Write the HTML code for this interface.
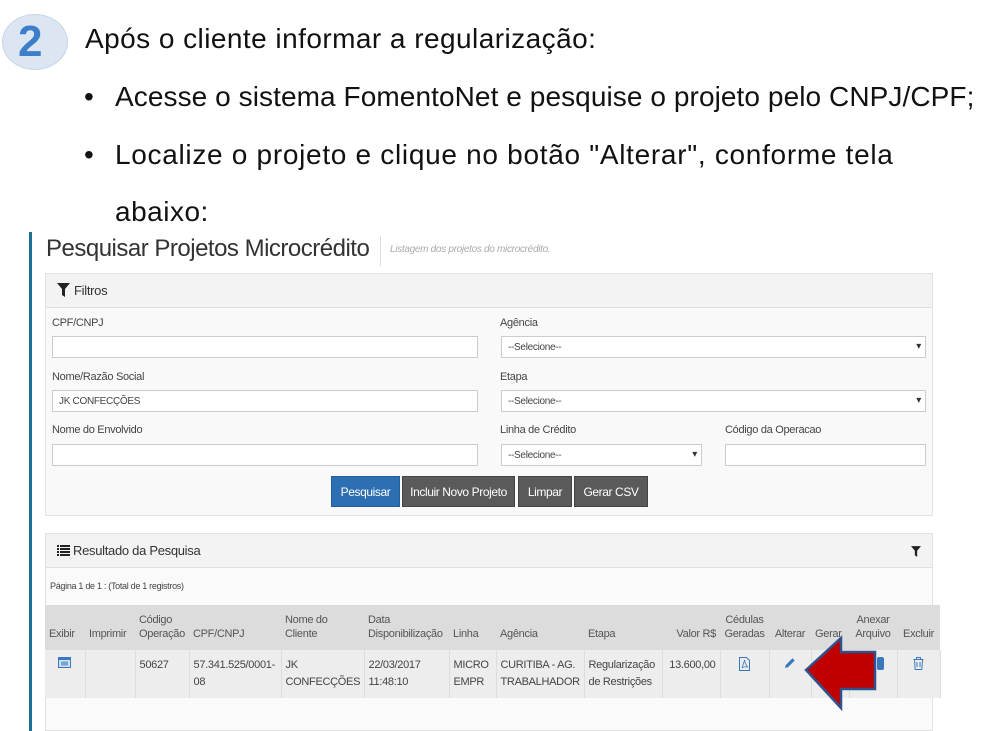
<!DOCTYPE html>
<html><head><meta charset="utf-8">
<style>
*{margin:0;padding:0;box-sizing:border-box}
body{width:999px;height:731px;overflow:hidden;background:#fff;position:relative;font-family:"Liberation Sans",sans-serif;color:#333}
.a{position:absolute}
.big{font-family:"Liberation Sans",sans-serif;font-size:28px;color:#111;white-space:nowrap}
.lbl{font-size:11px;color:#444;position:absolute;letter-spacing:-0.3px}
.inp{position:absolute;background:#fff;border:1px solid #ccc;height:22px;font-size:10px;color:#444;padding:5px 6px;letter-spacing:-0.3px}
.sel::after{content:"▾";position:absolute;right:4px;top:4px;font-size:10px;color:#333}
.btn{position:absolute;top:476px;height:31px;color:#fff;font-size:12px;line-height:31px;text-align:center;letter-spacing:-0.4px;background:#5a5a5a;border:1px solid #444}
table{position:absolute;left:45px;top:605px;border-collapse:collapse;font-size:11px;letter-spacing:-0.3px;color:#444;table-layout:fixed;width:895px}
th{background:#dcdcdc;color:#555;text-align:left;vertical-align:bottom;padding:3px 4px 9px;height:45px;line-height:14px;font-weight:normal;white-space:nowrap}
td{background:#ededed;border-right:1px solid #ddd;vertical-align:top;padding:7px 4px;height:48px;line-height:17px;white-space:nowrap;overflow:hidden}
</style></head><body>
<div class="a" style="left:2px;top:14px;width:66px;height:56px;border-radius:50%;background:#dce6f2;border:1px solid #c5d5e8"></div>
<div class="a" style="left:18px;top:14px;font-size:44px;font-weight:bold;color:#3c7fc8;line-height:56px">2</div>
<div class="a big" style="left:85px;top:23px;letter-spacing:0.45px">Após o cliente informar a regularização:</div>
<div class="a big" style="left:84px;top:81px">•</div>
<div class="a big" style="left:115px;top:81px;letter-spacing:0.08px">Acesse o sistema FomentoNet e pesquise o projeto pelo CNPJ/CPF;</div>
<div class="a big" style="left:84px;top:139px">•</div>
<div class="a big" style="left:115px;top:139px;letter-spacing:0.7px">Localize o projeto e clique no botão "Alterar", conforme tela</div>
<div class="a big" style="left:115px;top:196px;letter-spacing:0.5px">abaixo:</div>

<div class="a" style="left:29px;top:232px;width:3px;height:499px;background:#1f6f96"></div>
<div class="a" style="left:46px;top:235px;font-size:24px;color:#333;letter-spacing:-0.5px;white-space:nowrap">Pesquisar Projetos Microcrédito</div>
<div class="a" style="left:380px;top:236px;width:1px;height:30px;background:#ddd"></div>
<div class="a" style="left:390px;top:244px;font-size:10px;font-style:italic;color:#aaa;letter-spacing:-0.3px">Listagem dos projetos do microcrédito.</div>

<div class="a" style="left:45px;top:273px;width:888px;height:243px;background:#f9f9f9;border:1px solid #e2e2e2"></div>
<div class="a" style="left:46px;top:274px;width:886px;height:34px;background:#f3f3f3;border-bottom:1px solid #e0e0e0"></div>
<svg class="a" style="left:57px;top:283px" width="13" height="14" viewBox="0 0 13 14"><path d="M0 0H13L8 6V14L5 12V6Z" fill="#222"/></svg>
<div class="a" style="left:74px;top:283px;font-size:13px;color:#333;letter-spacing:-0.3px">Filtros</div>

<div class="lbl" style="left:52px;top:317px">CPF/CNPJ</div>
<div class="inp" style="left:52px;top:336px;width:426px"></div>
<div class="lbl" style="left:52px;top:371px">Nome/Razão Social</div>
<div class="inp" style="left:52px;top:390px;width:426px">JK CONFECÇÕES</div>
<div class="lbl" style="left:52px;top:424px">Nome do Envolvido</div>
<div class="inp" style="left:52px;top:444px;width:426px"></div>

<div class="lbl" style="left:500px;top:317px">Agência</div>
<div class="inp sel" style="left:501px;top:336px;width:425px">--Selecione--</div>
<div class="lbl" style="left:500px;top:371px">Etapa</div>
<div class="inp sel" style="left:501px;top:390px;width:425px">--Selecione--</div>
<div class="lbl" style="left:500px;top:424px">Linha de Crédito</div>
<div class="inp sel" style="left:501px;top:444px;width:201px">--Selecione--</div>
<div class="lbl" style="left:725px;top:424px">Código da Operacao</div>
<div class="inp" style="left:725px;top:444px;width:201px"></div>

<div class="btn" style="left:331px;width:69px;background:#2c6fb2;border-color:#22609e">Pesquisar</div>
<div class="btn" style="left:402px;width:113px">Incluir Novo Projeto</div>
<div class="btn" style="left:518px;width:54px">Limpar</div>
<div class="btn" style="left:574px;width:74px">Gerar CSV</div>

<div class="a" style="left:45px;top:533px;width:888px;height:198px;background:#fafafa;border:1px solid #e2e2e2"></div>
<div class="a" style="left:46px;top:534px;width:886px;height:34px;background:#f3f3f3;border-bottom:1px solid #e0e0e0"></div>
<svg class="a" style="left:57px;top:545px" width="13" height="11" viewBox="0 0 13 11"><g fill="#222"><rect x="0" y="0" width="2" height="2"/><rect x="3" y="0" width="10" height="2"/><rect x="0" y="3" width="2" height="2"/><rect x="3" y="3" width="10" height="2"/><rect x="0" y="6" width="2" height="2"/><rect x="3" y="6" width="10" height="2"/><rect x="0" y="9" width="2" height="2"/><rect x="3" y="9" width="10" height="2"/></g></svg>
<div class="a" style="left:73px;top:543px;font-size:13px;color:#333;letter-spacing:-0.3px">Resultado da Pesquisa</div>
<svg class="a" style="left:911px;top:546px" width="10" height="11" viewBox="0 0 13 14"><path d="M0 0H13L8 6V14L5 12V6Z" fill="#222"/></svg>
<div class="a" style="left:50px;top:581px;font-size:9px;color:#444;letter-spacing:-0.3px">Página 1 de 1 : (Total de 1 registros)</div>

<table>
<colgroup><col style="width:40px"><col style="width:50px"><col style="width:54px"><col style="width:92px"><col style="width:83px"><col style="width:85px"><col style="width:47px"><col style="width:88px"><col style="width:78px"><col style="width:58px"><col style="width:49px"><col style="width:42px"><col style="width:38px"><col style="width:48px"><col style="width:43px"></colgroup>
<tr>
<th>Exibir</th><th>Imprimir</th><th>Código<br>Operação</th><th>CPF/CNPJ</th><th>Nome do<br>Cliente</th><th>Data<br>Disponibilização</th><th>Linha</th><th>Agência</th><th>Etapa</th><th style="text-align:right">Valor R$</th><th style="text-align:center">Cédulas<br>Geradas</th><th style="text-align:center">Alterar</th><th>Gerar</th><th style="text-align:center">Anexar<br>Arquivo</th><th style="text-align:center">Excluir</th>
</tr>
<tr>
<td style="text-align:center"><svg width="13" height="11" viewBox="0 0 13 11"><rect x="0.5" y="0.5" width="12" height="10" fill="#cfe0f3" stroke="#3a78bd"/><rect x="0.5" y="0.5" width="12" height="2.5" fill="#3a78bd"/><rect x="3" y="4.5" width="7" height="4" fill="#3a78bd" opacity=".6"/></svg></td>
<td></td><td>50627</td><td>57.341.525/0001-<br>08</td><td>JK<br>CONFECÇÕES</td><td>22/03/2017<br>11:48:10</td><td>MICRO<br>EMPR</td><td>CURITIBA - AG.<br>TRABALHADOR</td><td>Regularização<br>de Restrições</td><td style="text-align:right">13.600,00</td>
<td style="text-align:center"><svg width="11" height="14" viewBox="0 0 11 14"><path d="M0.5 0.5H7.5L10.5 3.5V13.5H0.5Z" fill="none" stroke="#3a78bd"/><path d="M3 11C4 8 5 5 5.5 3C6 5 7 8 8.5 10C6 9.5 4 10 3 11Z" fill="none" stroke="#3a78bd" stroke-width=".8"/></svg></td>
<td style="text-align:center"><svg width="12" height="12" viewBox="0 0 12 12"><path d="M1 11L1.8 8L8.5 1.3L10.7 3.5L4 10.2Z" fill="#3a78bd"/></svg></td>
<td></td>
<td style="text-align:center"><div style="display:inline-block;width:7px;height:13px;background:#3a78bd;border-radius:2px;margin-left:14px"></div></td>
<td style="text-align:center"><svg width="11" height="13" viewBox="0 0 11 13"><path d="M0.5 2.5H10.5M3.5 2.5V0.5H7.5V2.5M1.5 2.5L2.2 12.5H8.8L9.5 2.5M4 5V10M7 5V10" fill="none" stroke="#3a78bd"/></svg></td>
</tr>
</table>

<svg class="a" style="left:0;top:0" width="999" height="731"><path d="M806 670L841 638V652H875V689H841V708Z" fill="#c00000" stroke="#2f528f" stroke-width="2.5" stroke-linejoin="miter"/></svg>
</body></html>
